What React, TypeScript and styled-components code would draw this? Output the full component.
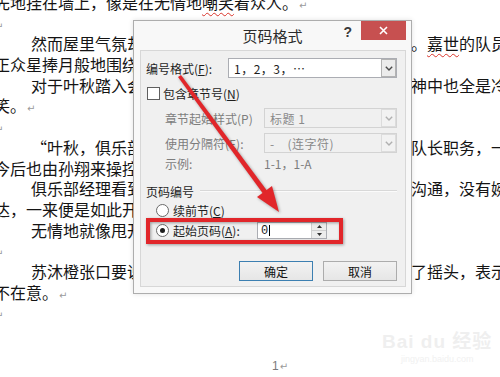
import { createGlobalStyle, styled } from "styled-components";

const GlobalStyle = createGlobalStyle`
  html, body {
    margin: 0;
    padding: 0;
    background: #fff;
  }
  body {
    width: 500px;
    height: 377px;
    overflow: hidden;
    font-family: "Noto Sans CJK SC", "Noto Sans", sans-serif;
  }
`;

const Page = styled.div`
  position: relative;
  width: 500px;
  height: 377px;
  overflow: hidden;
  background: #fff;
`;

/* ---------- word document behind the dialog ---------- */

const Doc = styled.div`
  margin: -8px 0 0 -6px;
  font-size: 16px;
  color: #141414;
`;

const Line = styled.div`
  display: flex;
  height: 20.7px;
  line-height: 20.7px;
  white-space: nowrap;
`;

// the part of a line left of the dialog; its width puts the right run at x=411
const LeftRun = styled.div<{ $indent?: boolean }>`
  flex: none;
  width: 417px;
  box-sizing: border-box;
  padding-left: ${(p) => (p.$indent ? "37px" : "0")};
`;

const RightRun = styled.div`
  flex: none;
`;

const Mark = styled.span`
  font-family: "DejaVu Sans", sans-serif;
  font-size: 10px;
  color: #9a9a9a;
  margin-left: 1px;
`;

const Squiggle = styled.span`
  text-decoration: underline wavy #d9342b;
  text-decoration-thickness: 1px;
  text-underline-offset: 3px;
`;

const Footer = styled.div`
  margin-top: 35px;
  padding-left: 278px;
  font-family: "Liberation Sans", sans-serif;
  font-size: 12px;
  line-height: 16px;
  color: #7a7a7a;
`;

const Watermark = styled.div`
  position: absolute;
  left: 382px;
  top: 331px;
  display: flex;
  flex-direction: column;
  align-items: center;
  color: #efefef;
  font-family: "Liberation Sans", "Noto Sans CJK SC", sans-serif;
`;

const WmLogo = styled.span`
  font-size: 19px;
  font-weight: bold;
  letter-spacing: 1px;
  line-height: 22px;
`;

const WmUrl = styled.span`
  font-size: 9px;
  line-height: 12px;
  color: #f1f1f1;
`;

/* ---------- dialog ---------- */

const Dialog = styled.div`
  position: absolute;
  left: 133px;
  top: 20px;
  width: 279px;
  height: 274px;
  box-sizing: border-box;
  border: 1px solid #adadad;
  background: #f8f8f8;
  box-shadow: 0 0 5px rgba(0, 0, 0, 0.12);
  display: flex;
  flex-direction: column;
  font-family: "Noto Sans CJK SC", sans-serif;
  font-size: 12px;
  color: #1e1e1e;
`;

const TitleBar = styled.div`
  height: 29px;
  flex: none;
  display: grid;
  grid-template-columns: 1fr auto 1fr;
  align-items: center;
`;

const Title = styled.div`
  font-size: 15px;
  color: #2a2a2a;
`;

const TitleTools = styled.div`
  align-self: start;
  display: flex;
  justify-content: flex-end;
  align-items: flex-start;
  gap: 9px;
  margin-right: 5px;
`;

const Help = styled.span`
  margin-top: 3px;
  font-family: "Liberation Sans", sans-serif;
  font-weight: bold;
  font-size: 14px;
  line-height: 16px;
  color: #3a3a3a;
`;

const CloseBtn = styled.div`
  width: 45px;
  height: 19px;
  background: #c75050;
  display: flex;
  align-items: center;
  justify-content: center;
`;

const Panel = styled.div`
  flex: 1;
  margin: 0 5px 6px 6px;
  border: 1px solid #d7d7d7;
  background: #f0f0f0;
  padding: 7px 8px 0 5px;
  display: flex;
  flex-direction: column;
`;

const Row = styled.div<{ $gap?: number; $h?: number; $pad?: number }>`
  display: flex;
  align-items: center;
  height: ${(p) => p.$h ?? 20}px;
  margin-top: ${(p) => p.$gap ?? 0}px;
  padding-left: ${(p) => p.$pad ?? 0}px;
`;

const Label = styled.span<{ $w?: number; $muted?: boolean }>`
  flex: none;
  width: ${(p) => (p.$w ? `${p.$w}px` : "auto")};
  color: ${(p) => (p.$muted ? "#7d7d7d" : "#1e1e1e")};
  white-space: nowrap;
`;

const Select = styled.div<{ $disabled?: boolean }>`
  flex: 1;
  height: 20px;
  box-sizing: border-box;
  border: 1px solid ${(p) => (p.$disabled ? "#d3d3d3" : "#abadb3")};
  background: ${(p) => (p.$disabled ? "#f0f0f0" : "#fff")};
  color: ${(p) => (p.$disabled ? "#8a8a8a" : "#1e1e1e")};
  display: flex;
  align-items: center;
  padding: 0 0 0 5px;
`;

const SelectText = styled.span`
  flex: 1;
  white-space: nowrap;
  letter-spacing: 0.5px;
`;

const DropButton = styled.span<{ $disabled?: boolean }>`
  width: 15px;
  height: 18px;
  box-sizing: border-box;
  border: 1px solid ${(p) => (p.$disabled ? "#dcdcdc" : "#b3b3b3")};
  background: ${(p) => (p.$disabled ? "#f2f2f2" : "#ececec")};
  display: flex;
  align-items: center;
  justify-content: center;
`;

const Checkbox = styled.span`
  flex: none;
  width: 13px;
  height: 13px;
  box-sizing: border-box;
  margin: 0 3px 0 1px;
  border: 1px solid #5f5f5f;
  background: #fff;
`;

const Radio = styled.span<{ $checked?: boolean }>`
  flex: none;
  width: 13px;
  height: 13px;
  box-sizing: border-box;
  margin-right: 4px;
  border-radius: 50%;
  border: 1px solid #6a6a6a;
  background: #fff;
  display: flex;
  align-items: center;
  justify-content: center;
  &::after {
    content: "";
    width: 5px;
    height: 5px;
    border-radius: 50%;
    background: ${(p) => (p.$checked ? "#1e1e1e" : "transparent")};
  }
`;

const GroupHeader = styled.div`
  display: flex;
  align-items: center;
  height: 16px;
  margin-top: 12px;
  gap: 6px;
`;

const GroupRule = styled.span`
  flex: 1;
  height: 1px;
  background: #d8d8d8;
  border-bottom: 1px solid #fbfbfb;
`;

const SpinInput = styled.div`
  width: 70px;
  height: 17px;
  box-sizing: border-box;
  border: 1px solid #abadb3;
  background: #fff;
  display: flex;
`;

const SpinValue = styled.span`
  flex: 1;
  padding-left: 3px;
  display: flex;
  align-items: center;
  font-family: "Liberation Mono", monospace;
  font-size: 12px;
`;

const Caret = styled.span`
  width: 1px;
  height: 11px;
  margin-left: 1px;
  background: #000;
`;

const Spinner = styled.span`
  width: 14px;
  display: flex;
  flex-direction: column;
  border-left: 1px solid #cfcfcf;
  background: #ececec;
`;

const SpinHalf = styled.span<{ $top?: boolean }>`
  flex: 1;
  display: flex;
  align-items: center;
  justify-content: center;
  border-bottom: ${(p) => (p.$top ? "1px solid #cfcfcf" : "none")};
`;

const ButtonRow = styled.div`
  display: flex;
  justify-content: flex-end;
  gap: 10px;
  margin-top: 22px;
`;

const Button = styled.button<{ $primary?: boolean }>`
  width: 74px;
  height: 20px;
  padding: 0;
  border: 1px solid ${(p) => (p.$primary ? "#3c7fb1" : "#acacac")};
  background: linear-gradient(#f2f2f2, #e6e6e6);
  font-family: "Noto Sans CJK SC", sans-serif;
  font-size: 12px;
  color: #111;
`;

/* ---------- red annotation drawn over the screenshot ---------- */

const Annotation = styled.svg`
  position: absolute;
  left: 0;
  top: 0;
  width: 500px;
  height: 377px;
  pointer-events: none;
  filter: drop-shadow(1px 1px 1.5px rgba(0, 0, 0, 0.35));
`;

const Chevron = ({ color }: { color: string }) => (
  <svg width="8" height="5" viewBox="0 0 8 5">
    <polyline points="0.8,0.8 4,4 7.2,0.8" fill="none" stroke={color} strokeWidth="1.4" />
  </svg>
);

const P = () => <Mark>↵</Mark>;

export default function App() {
  return (
    <Page>
      <GlobalStyle />
      <Doc>
        <Line>
          <LeftRun>
            先地挂在墙上，像是在无情地<Squiggle>嘲笑</Squiggle>着众人。<P />
          </LeftRun>
        </Line>
        <Line>
          <LeftRun>
            <P />
          </LeftRun>
        </Line>
        <Line>
          <LeftRun $indent>然而屋里气氛却</LeftRun>
          <RightRun>
            。<Squiggle>嘉世</Squiggle>的队员们
          </RightRun>
        </Line>
        <Line>
          <LeftRun>正众星捧月般地围绕</LeftRun>
        </Line>
        <Line>
          <LeftRun $indent>对于叶秋踏入会</LeftRun>
          <RightRun>神中也全是冷漠</RightRun>
        </Line>
        <Line>
          <LeftRun>
            笑。<P />
          </LeftRun>
        </Line>
        <Line>
          <LeftRun>
            <P />
          </LeftRun>
        </Line>
        <Line>
          <LeftRun $indent>“叶秋，俱乐部</LeftRun>
          <RightRun>队长职务，一叶</RightRun>
        </Line>
        <Line>
          <LeftRun>今后也由孙翔来操控</LeftRun>
        </Line>
        <Line>
          <LeftRun $indent>俱乐部经理看到</LeftRun>
          <RightRun>沟通，没有婉转</RightRun>
        </Line>
        <Line>
          <LeftRun>达，一来便是如此开</LeftRun>
        </Line>
        <Line>
          <LeftRun $indent>无情地就像甩开</LeftRun>
        </Line>
        <Line>
          <LeftRun>
            <P />
          </LeftRun>
        </Line>
        <Line>
          <LeftRun $indent>苏沐橙张口要说</LeftRun>
          <RightRun>了摇头，表示</RightRun>
        </Line>
        <Line>
          <LeftRun>
            不在意。<P />
          </LeftRun>
        </Line>
        <Line>
          <LeftRun>
            <P />
          </LeftRun>
        </Line>
        <Footer>
          1<P />
        </Footer>
      </Doc>

      <Watermark>
        <WmLogo>Bai du 经验</WmLogo>
        <WmUrl>jingyan.baidu.com</WmUrl>
      </Watermark>

      <Dialog>
        <TitleBar>
          <span />
          <Title>页码格式</Title>
          <TitleTools>
            <Help>?</Help>
            <CloseBtn>
              <svg width="9" height="9" viewBox="0 0 9 9">
                <path d="M1 1 L8 8 M8 1 L1 8" stroke="#fff" strokeWidth="1.6" />
              </svg>
            </CloseBtn>
          </TitleTools>
        </TitleBar>

        <Panel>
          <Row>
            <Label $w={82}>
              编号格式(<u>F</u>):
            </Label>
            <Select>
              <SelectText>1，2，3，…</SelectText>
              <DropButton>
                <Chevron color="#4a4a4a" />
              </DropButton>
            </Select>
          </Row>

          <Row $gap={5}>
            <Checkbox />
            <Label>
              包含章节号(<u>N</u>)
            </Label>
          </Row>

          <Row $gap={5} $pad={19}>
            <Label $w={99} $muted>
              章节起始样式(P)
            </Label>
            <Select $disabled>
              <SelectText>标题 1</SelectText>
              <DropButton $disabled>
                <Chevron color="#b0b0b0" />
              </DropButton>
            </Select>
          </Row>

          <Row $gap={5} $pad={19}>
            <Label $w={99} $muted>
              使用分隔符(E):
            </Label>
            <Select $disabled>
              <SelectText>-&nbsp;&nbsp;&nbsp;&nbsp;(连字符)</SelectText>
              <DropButton $disabled>
                <Chevron color="#b0b0b0" />
              </DropButton>
            </Select>
          </Row>

          <Row $gap={2} $h={16} $pad={19}>
            <Label $w={99} $muted>
              示例:
            </Label>
            <Label $muted>1-1，1-A</Label>
          </Row>

          <GroupHeader>
            <Label>页码编号</Label>
            <GroupRule />
          </GroupHeader>

          <Row $gap={3} $h={16} $pad={10}>
            <Radio />
            <Label>
              续前节(<u>C</u>)
            </Label>
          </Row>

          <Row $gap={4} $h={17} $pad={10}>
            <Radio $checked />
            <Label $w={84}>
              起始页码(<u>A</u>):
            </Label>
            <SpinInput>
              <SpinValue>
                0<Caret />
              </SpinValue>
              <Spinner>
                <SpinHalf $top>
                  <svg width="5" height="3" viewBox="0 0 5 3">
                    <polygon points="0,3 2.5,0 5,3" fill="#333" />
                  </svg>
                </SpinHalf>
                <SpinHalf>
                  <svg width="5" height="3" viewBox="0 0 5 3">
                    <polygon points="0,0 2.5,3 5,0" fill="#333" />
                  </svg>
                </SpinHalf>
              </Spinner>
            </SpinInput>
          </Row>

          <ButtonRow>
            <Button $primary>确定</Button>
            <Button>取消</Button>
          </ButtonRow>
        </Panel>
      </Dialog>

      <Annotation viewBox="0 0 500 377">
        <rect x="148" y="220" width="193" height="22" fill="none" stroke="#e1262a" strokeWidth="4" />
        <polygon points="178,77 181,75 268,192 264,195" fill="#e1262a" />
        <polygon points="279,212 257,197 272,186" fill="#e1262a" />
      </Annotation>
    </Page>
  );
}
